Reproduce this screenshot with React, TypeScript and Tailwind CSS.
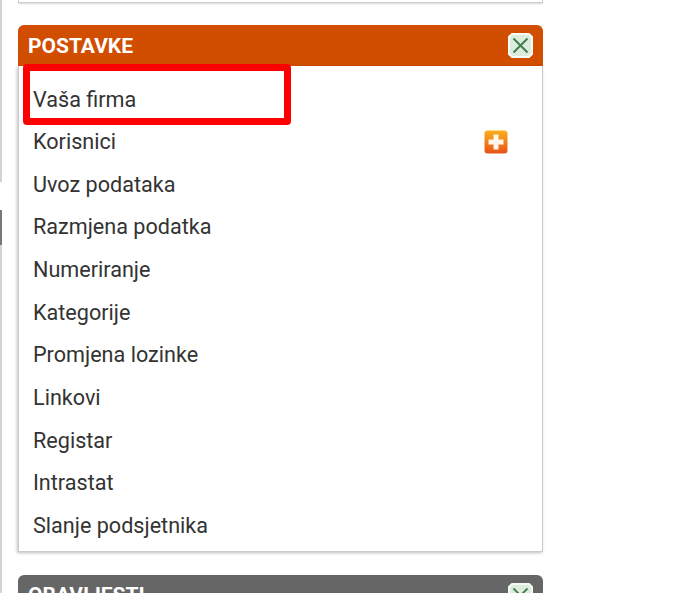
const items = ["Vaša firma","Korisnici","Uvoz podataka","Razmjena podatka","Numeriranje","Kategorije","Promjena lozinke","Linkovi","Registar","Intrastat","Slanje podsjetnika"];

function CloseIcon() {
  return (
    <svg width="25" height="25" viewBox="0 0 25 25" className="block">
      <path d="M4 1h17l3 3v17l-3 3H4l-3-3V4z" fill="#dcecdd" stroke="#f6faf6" strokeWidth="2" />
      <path d="M5.500 5.500l14 14M19.500 5.500l-14 14" stroke="#3f7a4c" strokeWidth="1.8" fill="none" />
    </svg>
  );
}

function PlusIcon() {
  return (
    <svg width="24" height="24" viewBox="0 0 24 24" className="block">
      <defs>
        <linearGradient id="pl" x1="0" y1="0" x2="0" y2="1">
          <stop offset="0" stopColor="#fbb01e" />
          <stop offset="1" stopColor="#e8521a" />
        </linearGradient>
      </defs>
      <rect x="0.500" y="0.500" width="23" height="23" rx="3" fill="url(#pl)" />
      <path d="M9.500 4.500h5v5h5v5h-5v5h-5v-5h-5v-5h5z" fill="#fff6ea" />
    </svg>
  );
}

export default function App() {
  return (
    <div className="h-[593px] w-[698px] overflow-hidden bg-white flex font-['Roboto',sans-serif]">
      <div className="w-[2px] flex flex-col shrink-0">
        <div className="h-[182px] bg-[#d4d4d4]" />
        <div className="h-[28px] bg-white" />
        <div className="h-[35px] bg-[#777777]" />
        <div className="flex-1 bg-[#d4d4d4]" />
      </div>
      <div className="ml-[16px] w-[525px] flex flex-col">
        <div className="h-[3px] shrink-0 bg-white border-b border-x border-[#cccccc] shadow-[0_1px_2px_rgba(0,0,0,0.15)]" />
        <div className="mt-[22px] shrink-0 relative">
          <div className="h-[41px] bg-[#d14d00] rounded-t-[6px] flex items-center justify-between pl-[10px] pr-[10px]">
            <span className="text-white text-[21px] font-bold leading-none pt-[2px]">POSTAVKE</span>
            <CloseIcon />
          </div>
          <div className="h-[486px] border-x border-b border-[#cccccc] shadow-[-1px_1px_3px_rgba(0,0,0,0.25)] pl-[14px] pr-[34px] pt-[12px] bg-white">
            {items.map((t, i) => (
              <div key={t} className="h-[42.65px] flex items-center justify-between text-[21.6px] text-[#333333] leading-none">
                <span>{t}</span>
                {i === 1 && <PlusIcon />}
              </div>
            ))}
          </div>
          <div className="absolute left-[5px] top-[39px] w-[268px] h-[61px] border-[7px] border-[#ff0000] rounded-[4px]" />
        </div>
        <div className="mt-[23px] shrink-0 h-[41px] bg-[#666666] rounded-t-[6px] flex items-start justify-between pl-[10px] pr-[10px] pt-[8px]">
          <span className="text-white text-[21px] font-bold leading-none pt-[2px]">OBAVIJESTI</span>
          <CloseIcon />
        </div>
      </div>
    </div>
  );
}
